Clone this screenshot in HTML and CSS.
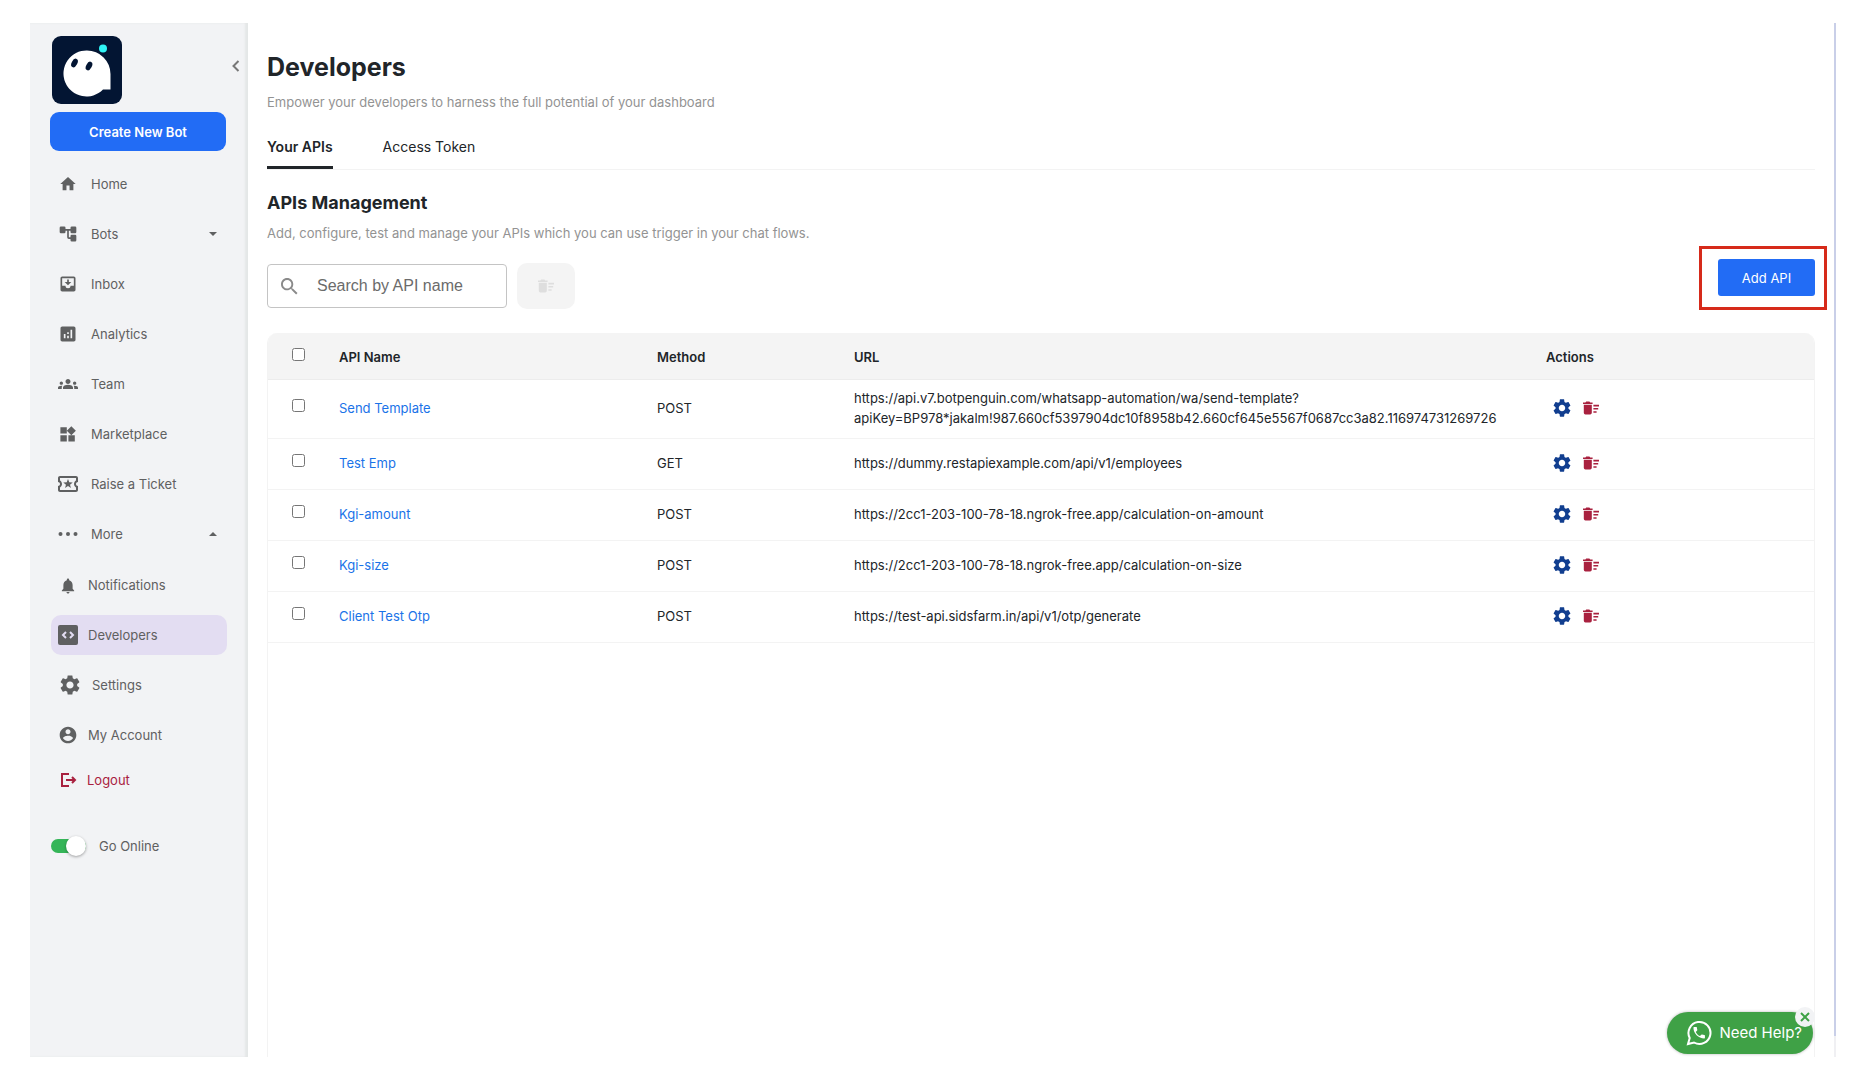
FILE: index.html
```html
<!DOCTYPE html>
<html lang="en">

<head>
    <meta charset="UTF-8">
    <meta name="viewport" content="width=device-width, initial-scale=1.0">
    <title>Developers</title>
    <link rel="stylesheet" href="styles.css">
</head>

<body>

    <!-- icons used more than once -->
    <svg class="sprite" aria-hidden="true">
        <symbol id="gear" viewBox="2 2 20 20">
            <path d="M19.14 12.94c.04-.3.06-.61.06-.94 0-.32-.02-.64-.07-.94l2.03-1.58c.18-.14.23-.41.12-.61l-1.92-3.32c-.12-.22-.37-.29-.59-.22l-2.39.96c-.5-.38-1.03-.7-1.62-.94l-.36-2.54c-.04-.24-.24-.41-.48-.41h-3.84c-.24 0-.43.17-.47.41l-.36 2.54c-.59.24-1.13.57-1.62.94l-2.39-.96c-.22-.08-.47 0-.59.22L2.74 8.87c-.12.21-.08.47.12.61l2.03 1.58c-.05.3-.09.63-.09.94s.02.64.07.94l-2.03 1.58c-.18.14-.23.41-.12.61l1.92 3.32c.12.22.37.29.59.22l2.39-.96c.5.38 1.03.7 1.62.94l.36 2.54c.05.24.24.41.48.41h3.84c.24 0 .44-.17.47-.41l.36-2.54c.59-.24 1.13-.56 1.62-.94l2.39.96c.22.08.47 0 .59-.22l1.92-3.32c.12-.22.07-.47-.12-.61l-2.01-1.58zM12 15.6c-1.98 0-3.6-1.62-3.6-3.6s1.62-3.6 3.6-3.6 3.6 1.62 3.6 3.6-1.62 3.6-3.6 3.6z" />
        </symbol>
        <symbol id="trash" viewBox="2 2 20 20">
            <path d="M15 16h4v2h-4zm0-8h7v2h-7zm0 4h6v2h-6zM3 18c0 1.1.9 2 2 2h6c1.1 0 2-.9 2-2V8H3v10zM14 5h-3l-1-1H6L5 5H2v2h12z" />
        </symbol>
    </svg>

    <div class="app">

        <aside class="sidebar">
            <div class="sidebar-top">
                <svg class="logo" viewBox="0 0 70 68" role="img" aria-label="Logo">
                    <rect width="70" height="68" rx="9" fill="#031533" />
                    <path d="M35 14.500a23 23 0 1 0 16 39h7.500V38A23.500 23.500 0 0 0 35 14.500z" fill="#fff" />
                    <ellipse cx="22.500" cy="27" rx="2.800" ry="4.600" transform="rotate(28 22.500 27)" fill="#031533" />
                    <ellipse cx="37" cy="30" rx="2.800" ry="4.600" transform="rotate(28 37 30)" fill="#031533" />
                    <circle cx="51" cy="12.500" r="4" fill="#2ff3f5" />
                </svg>
                <button class="collapse" type="button" aria-label="Collapse menu">
                    <svg viewBox="0 0 8 12"><path d="M6.500 1 1.500 6l5 5" /></svg>
                </button>
            </div>

            <button class="create-bot" type="button">Create New Bot</button>

            <nav>
                <ul class="nav">
                    <li><a href="#">
                        <svg class="icon" viewBox="-1 -1 26 26"><path d="M10 20v-6h4v6h5v-8h3L12 3 2 12h3v8z" /></svg>
                        Home
                    </a></li>
                    <li><a href="#">
                        <svg class="icon" viewBox="0 0 24 24"><path d="M22 9.500V4.500Q22 3 20.500 3h-4Q15 3 15 4.500V6H9V4.500Q9 3 7.500 3h-4Q2 3 2 4.500v5Q2 11 3.500 11h4Q9 11 9 9.500V8h2v8q0 2 2 2h2v1.500q0 1.500 1.500 1.500h4q1.500 0 1.500-1.500v-5q0-1.500-1.500-1.500h-4q-1.500 0-1.500 1.500V16h-2V8h2v1.500q0 1.500 1.500 1.500h4Q22 11 22 9.500z" /></svg>
                        Bots
                        <svg class="caret" viewBox="0 0 8 4"><path d="M0 0h8L4 4z" /></svg>
                    </a></li>
                    <li><a href="#">
                        <svg class="icon" viewBox="0 0 24 24"><path d="M19 3H5c-1.100 0-2 .9-2 2v14c0 1.100.9 2 2 2h14c1.100 0 2-.9 2-2V5c0-1.100-.9-2-2-2zm0 11h-4a3 3 0 0 1-6 0H5V5h14v9zm-3-4.500h-3V6.500h-2v3H8l4 4 4-4z" /></svg>
                        Inbox
                    </a></li>
                    <li><a href="#">
                        <svg class="icon" viewBox="0 0 24 24"><path d="M19 3H5c-1.100 0-2 .9-2 2v14c0 1.100.9 2 2 2h14c1.100 0 2-.9 2-2V5c0-1.100-.9-2-2-2zM9 17H7v-5h2v5zm4 0h-2v-3h2v3zm0-5h-2v-2h2v2zm4 5h-2V7h2v10z" /></svg>
                        Analytics
                    </a></li>
                    <li><a href="#">
                        <svg class="icon" viewBox="0 0 24 24"><path d="M12 12.750c1.630 0 3.070.39 4.240.9 1.080.48 1.760 1.560 1.760 2.730V18H6v-1.610c0-1.180.68-2.260 1.760-2.730 1.170-.52 2.610-.91 4.240-.91zM4 13c1.100 0 2-.9 2-2s-.9-2-2-2-2 .9-2 2 .9 2 2 2zm1.130 1.100c-.37-.06-.74-.1-1.130-.1-.99 0-1.930.21-2.780.58C.48 14.900 0 15.620 0 16.430V18h4.500v-1.610c0-.83.23-1.610.63-2.290zM20 13c1.100 0 2-.9 2-2s-.9-2-2-2-2 .9-2 2 .9 2 2 2zm4 3.430c0-.81-.48-1.530-1.220-1.850-.85-.37-1.790-.58-2.780-.58-.39 0-.76.04-1.130.1.4.68.63 1.460.63 2.290V18H24v-1.570zM12 6c1.660 0 3 1.340 3 3s-1.340 3-3 3-3-1.340-3-3 1.340-3 3-3z" /></svg>
                        Team
                    </a></li>
                    <li><a href="#">
                        <svg class="icon" viewBox="0 -1 25 25"><path d="M13 13v8h8v-8zM3 21h8v-8H3zM3 3v8h8V3zm13.660-1.310L11 7.340 16.660 13l5.660-5.660z" /></svg>
                        Marketplace
                    </a></li>
                    <li><a href="#">
                        <svg class="icon" viewBox="2 2 20 20"><path d="M22 10V6c0-1.110-.9-2-2-2H4c-1.100 0-1.990.89-1.990 2v4c1.100 0 1.990.9 1.990 2s-.89 2-2 2v4c0 1.100.9 2 2 2h16c1.100 0 2-.9 2-2v-4c-1.100 0-2-.9-2-2s.9-2 2-2zm-2-1.460c-1.190.69-2 1.990-2 3.460s.81 2.770 2 3.460V18H4v-2.540c1.190-.69 2-1.990 2-3.460 0-1.480-.8-2.770-1.990-3.460L4 6h16v2.540zM9.070 16L12 14.120 14.930 16l-.89-3.360 2.690-2.200-3.470-.21L12 7l-1.270 3.220-3.470.21 2.690 2.210z" /></svg>
                        Raise a Ticket
                    </a></li>
                    <li>
                        <a href="#">
                            <svg class="icon" viewBox="0 0 20 20"><circle cx="2.500" cy="10" r="2" /><circle cx="10" cy="10" r="2" /><circle cx="17.500" cy="10" r="2" /></svg>
                            More
                            <svg class="caret" viewBox="0 0 8 4"><path d="M0 4h8L4 0z" /></svg>
                        </a>
                        <ul class="nav sub-nav">
                            <li><a href="#">
                                <svg class="icon" viewBox="-1 -2 26 26"><path d="M12 22c1.100 0 2-.9 2-2h-4c0 1.100.89 2 2 2zm6-6v-5c0-3.070-1.640-5.640-4.500-6.320V4c0-.83-.67-1.500-1.500-1.500s-1.500.67-1.500 1.500v.68C7.630 5.360 6 7.920 6 11v5l-2 2v1h16v-1l-2-2z" /></svg>
                                Notifications
                            </a></li>
                            <li><a href="#" class="active">
                                <svg class="icon" viewBox="0 0 20 20"><rect width="20" height="20" rx="2" /><path class="code" d="M8 7 5 10l3 3M12 7l3 3-3 3" /></svg>
                                Developers
                            </a></li>
                            <li><a href="#" class="settings">
                                <svg class="icon"><use href="#gear" /></svg>
                                Settings
                            </a></li>
                            <li><a href="#">
                                <svg class="icon" viewBox="0 0 24 24"><path d="M12 2C6.480 2 2 6.480 2 12s4.480 10 10 10 10-4.480 10-10S17.520 2 12 2zm0 3c1.660 0 3 1.340 3 3s-1.340 3-3 3-3-1.340-3-3 1.340-3 3-3zm0 14.200c-2.500 0-4.710-1.280-6-3.220.03-1.990 4-3.080 6-3.080 1.990 0 5.970 1.090 6 3.080-1.290 1.940-3.500 3.220-6 3.220z" /></svg>
                                My Account
                            </a></li>
                        </ul>
                    </li>
                </ul>
            </nav>

            <a href="#" class="logout">
                <svg class="icon" viewBox="0 0 20 20"><path d="M11 4H4v12h7M8 10h9M14 7l3 3-3 3" /></svg>
                Logout
            </a>

            <label class="online">
                <input type="checkbox" class="switch" checked>
                Go Online
            </label>
        </aside>

        <main class="content">
            <h1>Developers</h1>
            <p class="hint">Empower your developers to harness the full potential of your dashboard</p>

            <div class="tabs">
                <a href="#" class="tab selected">Your APIs</a>
                <a href="#" class="tab">Access Token</a>
            </div>

            <h2>APIs Management</h2>
            <p class="hint">Add, configure, test and manage your APIs which you can use trigger in your chat flows.</p>

            <div class="toolbar">
                <div class="search">
                    <svg viewBox="3 3 18 18"><path d="M15.500 14h-.79l-.28-.27C15.410 12.590 16 11.110 16 9.500 16 5.910 13.090 3 9.500 3S3 5.910 3 9.500 5.910 16 9.500 16c1.610 0 3.090-.59 4.230-1.570l.27.28v.79l5 4.990L20.490 19l-4.990-5zm-6 0C7.010 14 5 11.990 5 9.500S7.010 5 9.500 5 14 7.010 14 9.500 11.990 14 9.500 14z" /></svg>
                    <input type="search" placeholder="Search by API name" aria-label="Search by API name">
                </div>
                <button class="bulk-delete" type="button" aria-label="Delete selected" disabled>
                    <svg><use href="#trash" /></svg>
                </button>
                <div class="add-wrap">
                    <button class="add-api" type="button">Add API</button>
                </div>
            </div>

            <div class="panel">
                <table>
                    <thead>
                        <tr>
                            <th class="col-check"><input type="checkbox" aria-label="Select all"></th>
                            <th class="col-name">API Name</th>
                            <th class="col-method">Method</th>
                            <th class="col-url">URL</th>
                            <th class="col-actions">Actions</th>
                        </tr>
                    </thead>
                    <tbody>
                        <tr>
                            <td><input type="checkbox" aria-label="Select Send Template"></td>
                            <td><a href="#">Send Template</a></td>
                            <td>POST</td>
                            <td>https://api.v7.botpenguin.com/whatsapp-automation/wa/send-template?<br>apiKey=BP978*jakalm!987.660cf5397904dc10f8958b42.660cf645e5567f0687cc3a82.116974731269726</td>
                            <td>
                                <div class="actions">
                                    <button type="button" class="edit" aria-label="Configure"><svg><use href="#gear" /></svg></button>
                                    <button type="button" class="delete" aria-label="Delete"><svg><use href="#trash" /></svg></button>
                                </div>
                            </td>
                        </tr>
                        <tr>
                            <td><input type="checkbox" aria-label="Select Test Emp"></td>
                            <td><a href="#">Test Emp</a></td>
                            <td>GET</td>
                            <td>https://dummy.restapiexample.com/api/v1/employees</td>
                            <td>
                                <div class="actions">
                                    <button type="button" class="edit" aria-label="Configure"><svg><use href="#gear" /></svg></button>
                                    <button type="button" class="delete" aria-label="Delete"><svg><use href="#trash" /></svg></button>
                                </div>
                            </td>
                        </tr>
                        <tr>
                            <td><input type="checkbox" aria-label="Select Kgi-amount"></td>
                            <td><a href="#">Kgi-amount</a></td>
                            <td>POST</td>
                            <td>https://2cc1-203-100-78-18.ngrok-free.app/calculation-on-amount</td>
                            <td>
                                <div class="actions">
                                    <button type="button" class="edit" aria-label="Configure"><svg><use href="#gear" /></svg></button>
                                    <button type="button" class="delete" aria-label="Delete"><svg><use href="#trash" /></svg></button>
                                </div>
                            </td>
                        </tr>
                        <tr>
                            <td><input type="checkbox" aria-label="Select Kgi-size"></td>
                            <td><a href="#">Kgi-size</a></td>
                            <td>POST</td>
                            <td>https://2cc1-203-100-78-18.ngrok-free.app/calculation-on-size</td>
                            <td>
                                <div class="actions">
                                    <button type="button" class="edit" aria-label="Configure"><svg><use href="#gear" /></svg></button>
                                    <button type="button" class="delete" aria-label="Delete"><svg><use href="#trash" /></svg></button>
                                </div>
                            </td>
                        </tr>
                        <tr>
                            <td><input type="checkbox" aria-label="Select Client Test Otp"></td>
                            <td><a href="#">Client Test Otp</a></td>
                            <td>POST</td>
                            <td>https://test-api.sidsfarm.in/api/v1/otp/generate</td>
                            <td>
                                <div class="actions">
                                    <button type="button" class="edit" aria-label="Configure"><svg><use href="#gear" /></svg></button>
                                    <button type="button" class="delete" aria-label="Delete"><svg><use href="#trash" /></svg></button>
                                </div>
                            </td>
                        </tr>
                    </tbody>
                </table>
            </div>
        </main>

        <div class="scroll-track"></div>

        <div class="help">
            <a href="#" class="help-link">
                <svg viewBox="0 0 26 26">
                    <path class="bubble" d="M2 24l1.700-6A11 11 0 1 1 8 22.500z" />
                    <path class="phone" transform="translate(5.500 5) scale(.64)" d="M6.620 10.790c1.440 2.830 3.760 5.140 6.590 6.590l2.200-2.200c.27-.27.67-.36 1.020-.24 1.120.37 2.330.57 3.570.57.55 0 1 .45 1 1V20c0 .55-.45 1-1 1-9.390 0-17-7.610-17-17 0-.55.45-1 1-1h3.500c.55 0 1 .45 1 1 0 1.250.2 2.450.57 3.570.11.35.03.74-.25 1.020z" />
                </svg>
                Need Help?
            </a>
            <button class="help-close" type="button" aria-label="Close">
                <svg viewBox="0 0 10 10"><path d="M1 1l8 8M9 1L1 9" /></svg>
            </button>
        </div>

    </div>

</body>

</html>
```
FILE: styles.css
```css
:root {
    --blue: #226cf5;
    --link: #1a73e8;
    --grey: #5f6061;
    --dark: #212529;
    --red: #a9213f;
    --line: #f3f3f3;
}

* {
    margin: 0;
    padding: 0;
    box-sizing: border-box;
}

body {
    min-height: 100vh;
    display: flex;
    padding: 23px 30px;
    background-color: #fff;
    color: var(--dark);
    font-family: "Inter", sans-serif;
    font-size: 13px;
    line-height: 20px;
}

a {
    color: inherit;
    text-decoration: none;
}

button {
    border: none;
    background: none;
    font-family: inherit;
    font-size: inherit;
    line-height: inherit;
    cursor: pointer;
}

svg {
    display: block;
    flex-shrink: 0;
    fill: currentColor;
}

.sprite {
    position: absolute;
    width: 0;
    height: 0;
}

.app {
    position: relative;
    flex: 1;
    min-width: 0;
    display: flex;
}

/* Sidebar */

.sidebar {
    width: 218px;
    flex-shrink: 0;
    padding: 13px 21px;
    background-color: #f2f3f5;
    box-shadow: inset -3px 0 2px #e4e7e7;
    color: var(--grey);
}

.sidebar-top {
    display: flex;
    align-items: flex-start;
    justify-content: space-between;
    padding-left: 1px;
}

.logo {
    width: 70px;
    height: 68px;
}

.collapse {
    margin: 22px -15px 0 0;
    padding: 2px;
}

.collapse svg {
    width: 8px;
    height: 12px;
    fill: none;
    stroke: #777;
    stroke-width: 2;
}

.create-bot {
    display: block;
    width: 176px;
    height: 39px;
    margin: 8px 0 13px -1px;
    border-radius: 9px;
    background-color: var(--blue);
    color: #fff;
    font-weight: 600;
}

.nav {
    display: flex;
    flex-direction: column;
    gap: 10px;
    list-style: none;
}

.nav a {
    display: flex;
    align-items: center;
    gap: 13px;
    height: 40px;
    padding: 0 10px 0 7px;
    border-radius: 10px;
}

.sub-nav {
    margin-top: 11px;
}

.sub-nav a {
    gap: 10px;
}

.sub-nav .settings {
    padding-left: 9px;
    gap: 12px;
}

.nav .active {
    background-color: #e3ddf2;
}

.icon {
    width: 20px;
    height: 20px;
}

.code {
    fill: none;
    stroke: #e3ddf2;
    stroke-width: 2;
}

.caret {
    width: 8px;
    height: 4px;
    margin-left: auto;
}

.logout {
    display: flex;
    align-items: center;
    gap: 9px;
    margin-top: 15px;
    padding-left: 7px;
    color: var(--red);
}

.logout .icon {
    fill: none;
    stroke: currentColor;
    stroke-width: 2;
}

.online {
    display: flex;
    align-items: center;
    gap: 13px;
    margin-top: 46px;
}

.switch {
    appearance: none;
    display: flex;
    align-items: center;
    width: 35px;
    height: 14px;
    border-radius: 7px;
    background-color: #bbb;
}

.switch:checked {
    justify-content: flex-end;
    background-color: #35b558;
}

.switch::before {
    content: "";
    width: 20px;
    height: 20px;
    flex-shrink: 0;
    border-radius: 50%;
    background-color: #fff;
    box-shadow: 0 1px 3px rgba(0, 0, 0, 0.35);
}

/* Content */

.content {
    flex: 1;
    min-width: 0;
    display: flex;
    flex-direction: column;
    padding: 29px 19px 0;
}

h1 {
    font-size: 25px;
    font-weight: 700;
    line-height: 30px;
}

h2 {
    margin-top: 21px;
    font-size: 18px;
    font-weight: 700;
    line-height: 24px;
}

.hint {
    color: #939393;
}

h1 + .hint {
    margin-top: 10px;
}

h2 + .hint {
    margin-top: 8px;
}

.tabs {
    display: flex;
    gap: 50px;
    margin-top: 25px;
    border-bottom: 1px solid var(--line);
}

.tab {
    padding-bottom: 9px;
    border-bottom: 3px solid transparent;
    font-size: 14px;
}

.tab.selected {
    border-color: var(--dark);
    font-weight: 600;
}

.toolbar {
    display: flex;
    align-items: flex-start;
    gap: 10px;
    margin-top: 16px;
}

.search {
    display: flex;
    align-items: center;
    gap: 19px;
    width: 240px;
    height: 44px;
    margin-top: 5px;
    padding: 0 13px;
    border: 1px solid #c4c4c4;
    border-radius: 4px;
}

.search svg {
    width: 17px;
    height: 17px;
    color: #8a8a8a;
}

.search input {
    flex: 1;
    min-width: 0;
    border: none;
    outline: none;
    font-family: "Liberation Sans", sans-serif;
    font-size: 16px;
}

.search input::placeholder {
    color: #6b6b6b;
}

.bulk-delete {
    display: grid;
    place-items: center;
    width: 58px;
    height: 46px;
    margin-top: 4px;
    border-radius: 10px;
    background-color: #f4f4f4;
    color: #dedede;
}

.bulk-delete svg {
    width: 16px;
    height: 16px;
}

.add-wrap {
    position: relative;
    margin-left: auto;
}

/* highlight frame round the button */
.add-wrap::after {
    content: "";
    position: absolute;
    inset: -13px -12px -14px -19px;
    border: 3px solid #d62a1a;
    pointer-events: none;
}

.add-api {
    display: block;
    width: 97px;
    height: 37px;
    border-radius: 3px;
    background-color: var(--blue);
    color: #fff;
}

.panel {
    flex: 1;
    margin-top: 24px;
    border: solid var(--line);
    border-width: 0 1px;
    border-radius: 10px 10px 0 0;
    overflow: hidden;
}

table {
    width: 100%;
    table-layout: fixed;
    border-collapse: collapse;
}

th,
td {
    height: 51px;
    border-bottom: 1px solid var(--line);
    text-align: left;
    vertical-align: middle;
    overflow-wrap: anywhere;
}

th {
    height: 46px;
    padding-top: 2px;
    background-color: #f4f4f4;
    border-color: #ececec;
    font-weight: 600;
}

td {
    padding: 8px 0 10px;
}

td a {
    color: var(--link);
}

th input,
td input {
    display: block;
    width: 13px;
    height: 13px;
    margin: 0 0 4px 24px;
}

.col-check {
    width: 71px;
}

.col-name {
    width: 318px;
}

.col-method {
    width: 197px;
}

.col-actions {
    width: 268px;
}

.actions {
    display: flex;
    align-items: center;
    gap: 12px;
    padding: 1px 0 0 7px;
}

.edit svg {
    width: 18px;
    height: 18px;
}

.delete svg {
    width: 16px;
    height: 16px;
}

.edit {
    color: #113e8f;
}

.delete {
    color: var(--red);
}

.scroll-track {
    width: 2px;
    background: linear-gradient(#c9cfe8 98%, #f0f0f3 98%);
}

/* Help button */

.help {
    position: absolute;
    right: 23px;
    bottom: 3px;
}

.help-link {
    display: flex;
    align-items: center;
    gap: 7px;
    height: 42px;
    padding: 0 11px 0 19px;
    border-radius: 21px;
    background-color: #3fa146;
    box-shadow: 0 0 3px rgba(0, 0, 0, 0.3);
    color: #fff;
    font-size: 15px;
}

.help-link svg {
    width: 26px;
    height: 26px;
}

.bubble {
    fill: none;
    stroke: currentColor;
    stroke-width: 2;
}

.help-close {
    position: absolute;
    top: -5px;
    right: -2px;
    display: grid;
    place-items: center;
    width: 20px;
    height: 20px;
    border-radius: 50%;
    background-color: #f2f3f5;
    color: #3fa146;
}

.help-close svg {
    width: 10px;
    height: 10px;
    stroke: currentColor;
    stroke-width: 2;
}
```
